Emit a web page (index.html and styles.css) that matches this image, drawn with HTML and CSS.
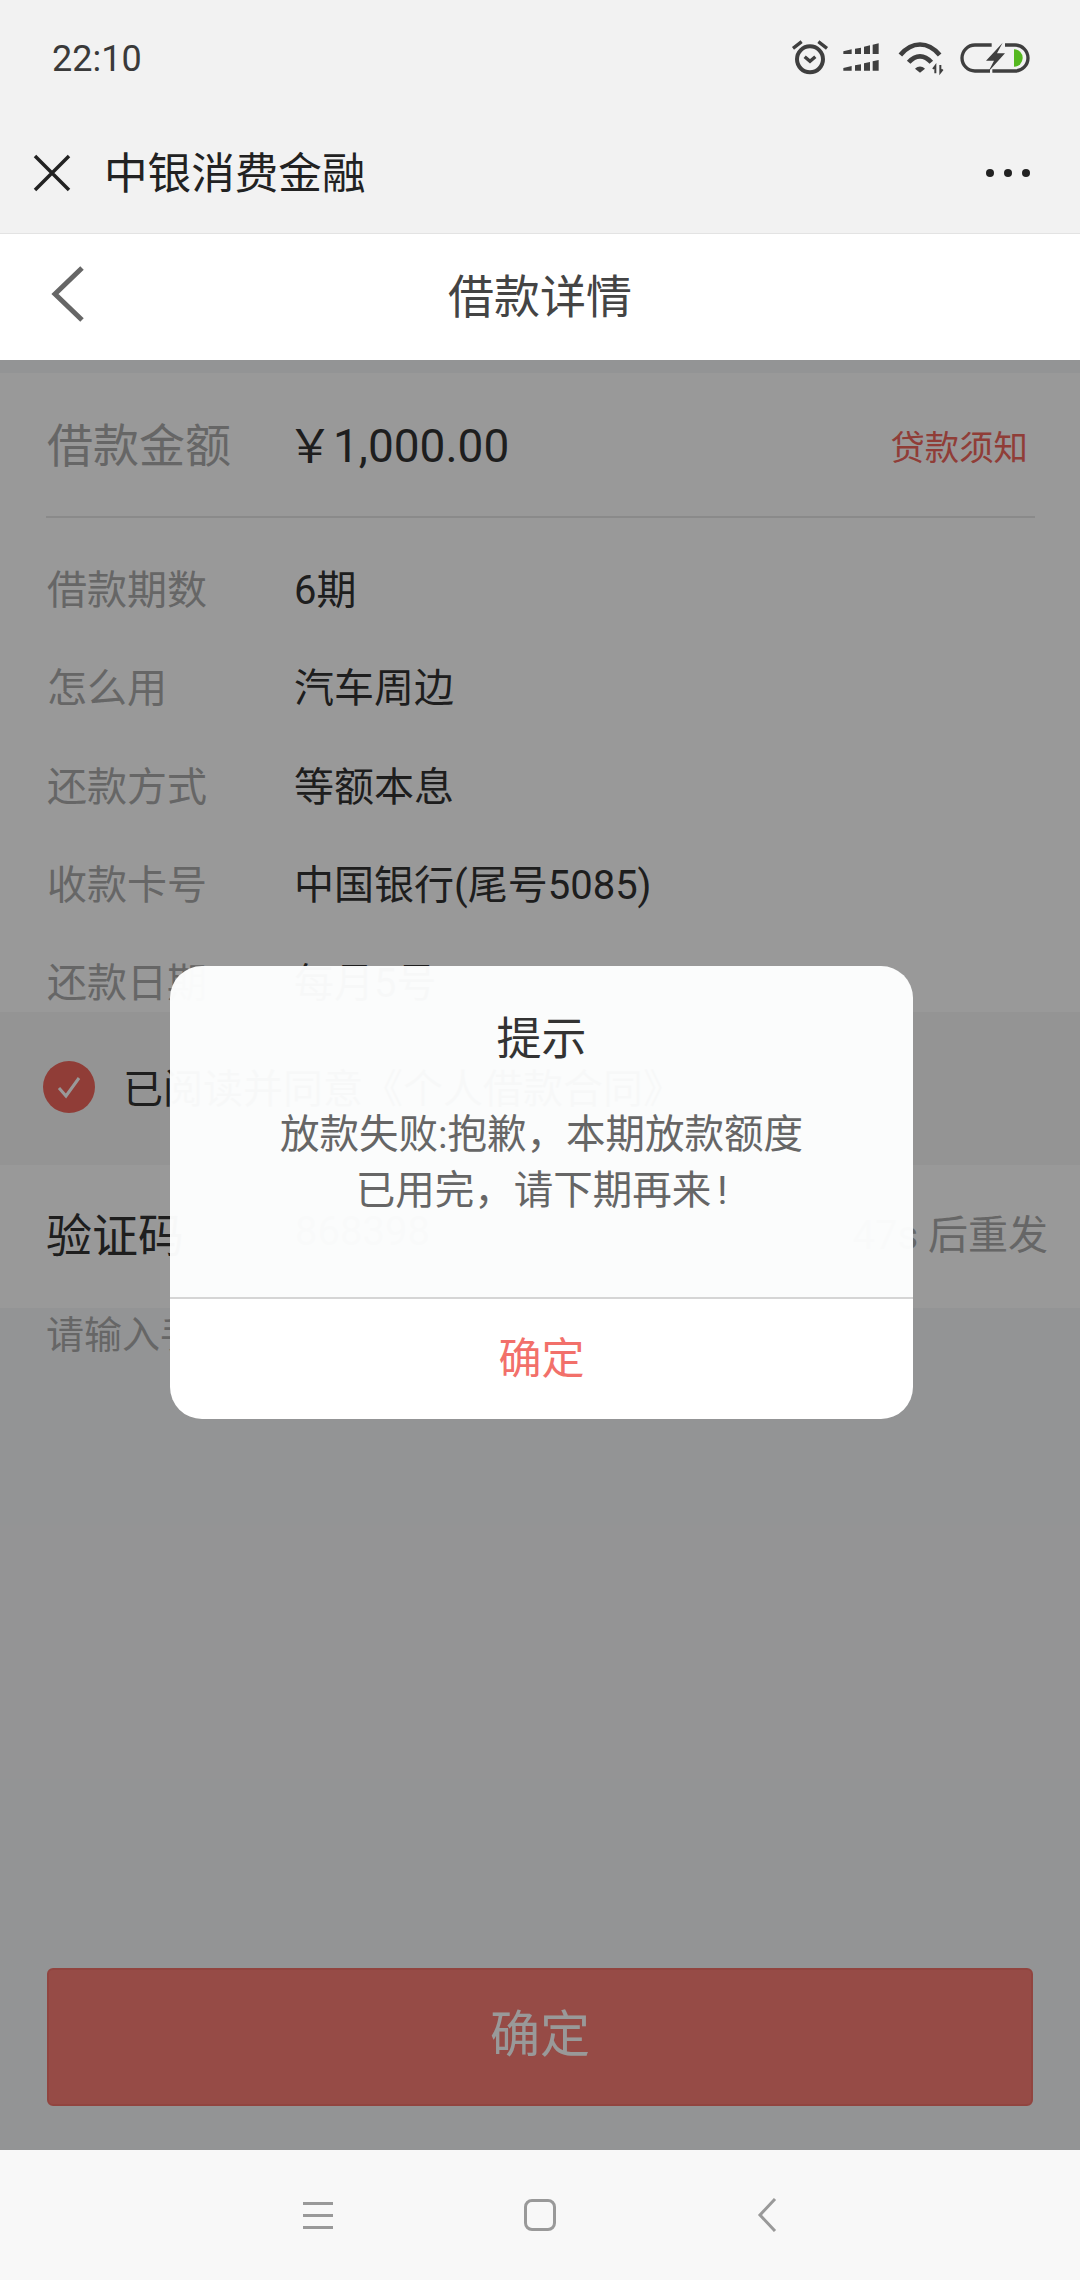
FILE: index.html
```html
<!DOCTYPE html>
<html lang="zh-CN">
<head>
    <meta charset="UTF-8">
    <meta name="viewport" content="width=device-width, initial-scale=1.0">
    <title>借款详情</title>
    <link rel="stylesheet" href="styles.css">
</head>
<body>
    <div class="status-bar">
        <span class="status-time">22:10</span>
        <svg class="status-icons" viewBox="0 0 900 210">
            <!-- alarm -->
            <circle cx="150" cy="118" r="39" fill="none" stroke="#3f3f3f" stroke-width="12"/>
            <path d="M134 110l16 14 16-14" fill="none" stroke="#3f3f3f" stroke-width="10"/>
            <path d="M99 85l26-20M201 85l-26-20" fill="none" stroke="#3f3f3f" stroke-width="10"/>
            <!-- signal -->
            <path d="M250 94l25-6v14h-25zM285 86l18-3v19h-18zM312 80l18-4v26h-18zM338 74l18-4v32h-18z" fill="#3f3f3f"/>
            <path d="M250 144l25-6v14h-25zM285 136l18-3v19h-18zM312 130l18-4v26h-18zM338 124l18-4v32h-18z" fill="#3f3f3f"/>
            <!-- wifi -->
            <path d="M421 105c35-42 83-42 118 0" fill="none" stroke="#3f3f3f" stroke-width="14"/>
            <path d="M446 127c21-24 47-24 68 0" fill="none" stroke="#3f3f3f" stroke-width="14"/>
            <path d="M465 146c10-9 20-9 30 0l-15 12z" fill="#3f3f3f"/>
            <path d="M526 160v-22l-7 9M541 135v22l7-9" fill="none" stroke="#3f3f3f" stroke-width="6"/>
            <!-- battery -->
            <path d="M695 75h-50a39 39 0 0 0 0 78h45M735 75h30a39 39 0 0 1 0 78h-68" fill="none" stroke="#3f3f3f" stroke-width="10"/>
            <path d="M728 68l-50 54h24l-17 33 50-55h-24z" fill="#3f3f3f"/>
            <path d="M762 88a26 26 0 0 1 0 52z" fill="#55b81f"/>
        </svg>
    </div>

    <div class="title-bar">
        <svg class="close-icon" viewBox="0 0 38 38">
            <path d="M2 2l34 34M36 2L2 36" stroke="#222" stroke-width="3.5"/>
        </svg>
        <span class="title-text">中银消费金融</span>
        <div class="more-dots"><i></i><i></i><i></i></div>
    </div>

    <div class="nav-bar">
        <svg class="back-icon" viewBox="0 0 34 56">
            <path d="M31 2L4 28l27 26" fill="none" stroke="#666" stroke-width="5"/>
        </svg>
        <span class="nav-title">借款详情</span>
    </div>

    <div class="page">
        <div class="info-section">
            <div class="amount-row">
                <span class="amount-label">借款金额</span>
                <span class="amount-value">￥1,000.00</span>
                <span class="notice-link">贷款须知</span>
            </div>
            <div class="info-list">
                <div class="info-row"><span class="info-label">借款期数</span><span class="info-value">6期</span></div>
                <div class="info-row"><span class="info-label">怎么用</span><span class="info-value">汽车周边</span></div>
                <div class="info-row"><span class="info-label">还款方式</span><span class="info-value">等额本息</span></div>
                <div class="info-row"><span class="info-label">收款卡号</span><span class="info-value">中国银行(尾号5085)</span></div>
                <div class="info-row"><span class="info-label">还款日期</span><span class="info-value">每月5号</span></div>
            </div>
        </div>

        <div class="agree-band">
            <svg class="check-icon" viewBox="0 0 52 52">
                <circle cx="26" cy="26" r="26" fill="#f0665c"/>
                <path d="M16 27l7 8 13-18" fill="none" stroke="#fff" stroke-width="3"/>
            </svg>
            <span class="agree-text">已阅读并同意《个人借款合同》</span>
        </div>

        <div class="code-row">
            <span class="code-label">验证码</span>
            <span class="code-value">868398</span>
            <span class="code-timer">47s 后重发</span>
        </div>

        <div class="code-hint">请输入手机验证码</div>

        <div class="submit-btn">确定</div>

        <div class="mask"></div>

        <div class="dialog">
            <div class="dialog-body">
                <div class="dialog-title">提示</div>
                <div class="dialog-msg">放款失败:抱歉，本期放款额度<br>已用完，请下期再来<span class="msg-end">!</span></div>
            </div>
            <div class="dialog-btn">确定</div>
        </div>
    </div>

    <div class="system-nav">
        <div class="menu-icon"><i></i><i></i><i></i></div>
        <div class="home-icon"></div>
        <svg class="sys-back-icon" viewBox="0 0 20 34">
            <path d="M18 1L3 17l15 16" fill="none" stroke="#999" stroke-width="3"/>
        </svg>
    </div>
</body>
</html>
```

FILE: styles.css
```css
* {
    box-sizing: border-box;
}

body {
    margin: 0;
    width: 1080px;
    height: 2280px;
    display: flex;
    flex-direction: column;
    overflow: hidden;
    font-family: Roboto, "Noto Sans CJK SC", sans-serif;
    background-color: #fff;
    color: #333;
}

/* top of the screen */
.status-bar {
    height: 112px;
    display: flex;
    justify-content: space-between;
    align-items: flex-start;
    padding: 20px 20px 0 52px;
    background-color: #f2f2f2;
}

.status-time {
    font-size: 36px;
    line-height: 78px;
    color: #3a3a3a;
}

.status-icons {
    width: 300px;
    height: 70px;
}

.title-bar {
    height: 122px;
    display: flex;
    align-items: center;
    padding: 0 50px 0 33px;
    background-color: #f2f2f2;
    border-bottom: 1px solid #e3e3e3;
}

.close-icon {
    width: 38px;
    height: 38px;
    flex-shrink: 0;
}

.title-text {
    margin: 0 0 6px 33px;
    font-size: 43.6px;
    color: #222;
}

.more-dots {
    margin-left: auto;
    display: flex;
    gap: 10px;
}

.more-dots i {
    width: 8px;
    height: 8px;
    border-radius: 50%;
    background-color: #222;
}

.nav-bar {
    position: relative;
    height: 126px;
    display: flex;
    align-items: center;
    justify-content: center;
    padding-bottom: 8px;
    background-color: #fff;
}

.back-icon {
    position: absolute;
    left: 51px;
    top: 32px;
    width: 34px;
    height: 56px;
}

.nav-title {
    font-size: 46px;
    color: #444;
}

/* page under the mask */
.page {
    position: relative;
    flex: 1;
    display: flex;
    flex-direction: column;
    background-color: #f6f7f8;
    padding-top: 13px;
}

.info-section {
    height: 639px;
    padding: 0 45px 0 46px;
    background-color: #fff;
}

.amount-row {
    height: 145px;
    display: flex;
    align-items: center;
    padding: 0 0 6px 1px;
    border-bottom: 2px solid #e6e6e6;
}

.amount-label {
    width: 240px;
    font-size: 46px;
    color: #aaa;
}

.amount-value {
    font-size: 46px;
    color: #333;
}

.notice-link {
    margin: 6px 7px 0 auto;
    font-size: 34.4px;
    color: #f0665c;
}

.info-list {
    display: flex;
    flex-direction: column;
    gap: 38.25px;
    padding-top: 39px;
}

.info-row {
    display: flex;
    height: 60px;
    align-items: center;
    padding-left: 1px;
    font-size: 40px;
}

.info-label {
    width: 247px;
    color: #aaa;
}

.info-value {
    color: #333;
}

.agree-band {
    height: 153px;
    display: flex;
    align-items: center;
    padding-left: 43px;
    background-color: #f7f7f7;
}

.check-icon {
    width: 52px;
    height: 52px;
    margin-bottom: 3px;
}

.agree-text {
    margin: 0 0 6px 28px;
    font-size: 40px;
    color: #333;
}

.code-row {
    height: 143px;
    display: flex;
    align-items: center;
    padding: 0 32px 10px 46px;
    background-color: #fff;
}

.code-label {
    width: 249px;
    font-size: 46px;
    color: #333;
}

.code-value {
    font-size: 40px;
    color: #999;
}

.code-timer {
    margin-left: auto;
    font-size: 40px;
    color: #aaa;
}

.code-hint {
    padding: 4px 46px 0;
    font-size: 38px;
    line-height: 46px;
    color: #aaa;
}

.submit-btn {
    margin: auto 47px 44px;
    height: 138px;
    display: flex;
    align-items: center;
    justify-content: center;
    padding-bottom: 14px;
    font-size: 50px;
    color: #fff;
    background-color: #fb7d75;
    border: 2px solid #f2726a;
    border-radius: 6px;
}

.mask {
    position: absolute;
    inset: 0;
    background-color: rgba(0, 0, 0, 0.4);
}

.dialog {
    position: absolute;
    left: 170px;
    top: 606px;
    width: 743px;
    height: 453px;
    display: flex;
    flex-direction: column;
    border-radius: 32px;
    overflow: hidden;
}

.dialog-body {
    height: 333px;
    text-align: center;
    background-color: rgba(253, 254, 254, 0.975);
    border-bottom: 2px solid #d5d5d5;
}

.dialog-title {
    padding-top: 43px;
    font-size: 45px;
    line-height: 62px;
    color: #333;
}

.dialog-msg {
    margin-top: 36px;
    font-size: 39.5px;
    line-height: 56px;
    color: #666;
}

.msg-end {
    margin-left: 6px;
}

.dialog-btn {
    flex: 1;
    display: flex;
    align-items: center;
    justify-content: center;
    padding-bottom: 8px;
    font-size: 43px;
    color: #f2706a;
    background-color: #fff;
}

/* android buttons */
.system-nav {
    position: relative;
    height: 130px;
    background-color: #f8f8f8;
}

.menu-icon {
    position: absolute;
    left: 303px;
    top: 52px;
    width: 30px;
    display: flex;
    flex-direction: column;
    gap: 9px;
}

.menu-icon i {
    height: 3px;
    background-color: #999;
}

.home-icon {
    position: absolute;
    left: 524px;
    top: 49px;
    width: 32px;
    height: 32px;
    border: 3px solid #999;
    border-radius: 8px;
}

.sys-back-icon {
    position: absolute;
    left: 757px;
    top: 48px;
    width: 20px;
    height: 34px;
}
```
